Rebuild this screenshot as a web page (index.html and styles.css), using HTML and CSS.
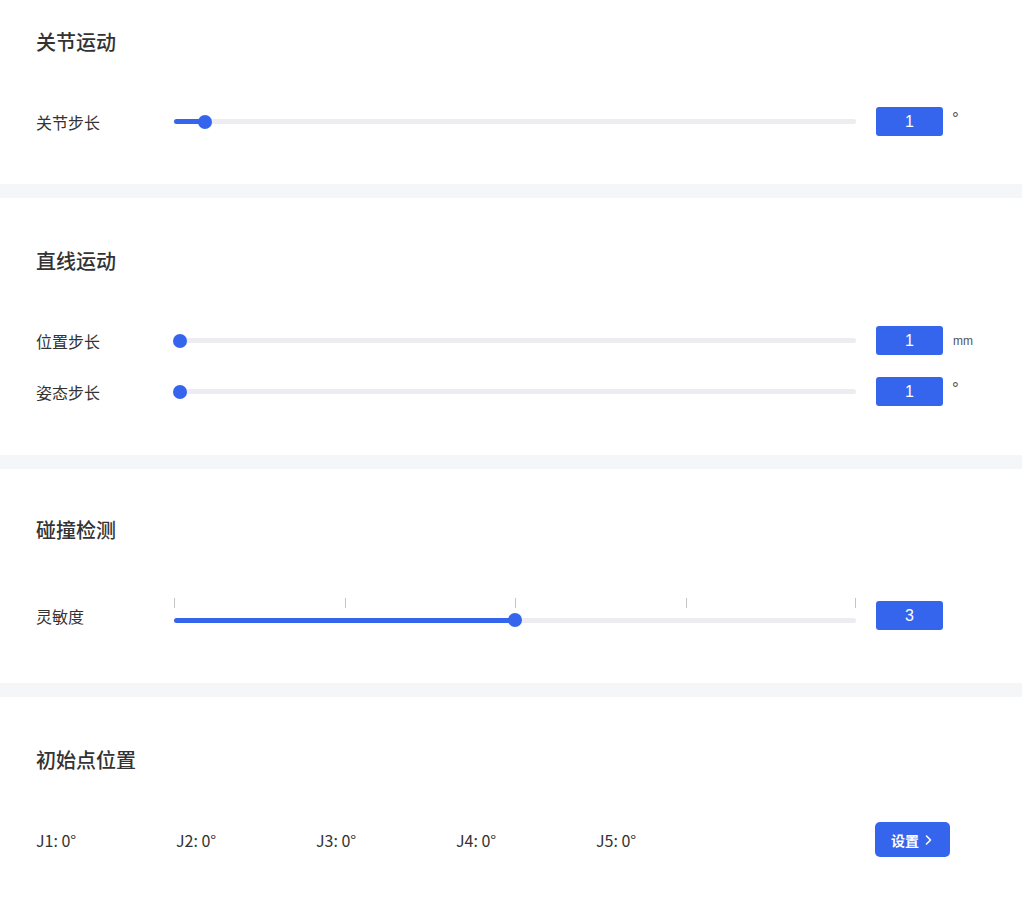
FILE: index.html
```html
<!DOCTYPE html>
<html lang="zh-CN">
<head>
<meta charset="utf-8">
<title>设置</title>
<link rel="stylesheet" href="styles.css">
</head>
<body>
<section class="panel panel-first">
  <h2 class="title">关节运动</h2>
  <div class="row row-first">
    <div class="label">关节步长</div>
    <div class="slider">
      <div class="track">
        <div class="fill" style="width:31px"></div>
        <div class="thumb" style="left:31px"></div>
      </div>
    </div>
    <div class="box">1</div>
    <div class="unit unit-deg">°</div>
  </div>
</section>

<section class="panel">
  <h2 class="title">直线运动</h2>
  <div class="row row-first">
    <div class="label">位置步长</div>
    <div class="slider">
      <div class="track">
        <div class="thumb" style="left:6px"></div>
      </div>
    </div>
    <div class="box">1</div>
    <div class="unit unit-mm">mm</div>
  </div>
  <div class="row row-next">
    <div class="label">姿态步长</div>
    <div class="slider">
      <div class="track">
        <div class="thumb" style="left:6px"></div>
      </div>
    </div>
    <div class="box">1</div>
    <div class="unit unit-deg">°</div>
  </div>
</section>

<section class="panel panel-collision">
  <h2 class="title">碰撞检测</h2>
  <div class="row row-marks">
    <div class="label">灵敏度</div>
    <div class="slider slider-marks">
      <div class="track">
        <span class="tick" style="left:0%"></span>
        <span class="tick" style="left:25%"></span>
        <span class="tick" style="left:50%"></span>
        <span class="tick" style="left:75%"></span>
        <span class="tick" style="left:calc(100% - 1px)"></span>
        <div class="fill" style="width:50%"></div>
        <div class="thumb" style="left:50%"></div>
      </div>
    </div>
    <div class="box">3</div>
    <div class="unit"></div>
  </div>
</section>

<section class="panel panel-last">
  <h2 class="title">初始点位置</h2>
  <div class="joints">
    <div class="joint">J1: 0°</div>
    <div class="joint">J2: 0°</div>
    <div class="joint">J3: 0°</div>
    <div class="joint">J4: 0°</div>
    <div class="joint">J5: 0°</div>
    <button class="btn">设置
      <svg class="chev" width="7" height="10" viewBox="0 0 7 10"><path d="M1.5 1 L5.5 5 L1.5 9" fill="none" stroke="#fff" stroke-width="1.6" stroke-linecap="round" stroke-linejoin="round"/></svg>
    </button>
  </div>
</section>
</body>
</html>
```

FILE: styles.css
```css
* { box-sizing: border-box; }
html, body { margin: 0; padding: 0; }
body {
  background: #f5f6f8;
  font-family: "Noto Sans CJK SC", "Noto Sans", sans-serif;
  color: #333;
  width: 1022px;
}
.panel {
  background: #fff;
  padding: 49px 36px 49px 36px;
  margin-bottom: 14px;
}
.panel-first { padding-top: 28px; padding-bottom: 48px; }
.panel-collision { padding-top: 47px; padding-bottom: 53px; }
.panel-last { padding-bottom: 46px; margin-bottom: 0; }

.title {
  margin: 0;
  font-size: 20px;
  line-height: 28px;
  font-weight: 500;
  color: #333;
}

.row {
  display: flex;
  align-items: center;
  height: 29px;
}
.row-first { margin-top: 51px; }
.row-next { margin-top: 22px; }
.row-marks { margin-top: 57px; }

.label {
  width: 138px;
  flex: none;
  font-size: 16px;
  color: #333;
}
.slider {
  flex: 1;
  min-width: 0;
  height: 14px;
  display: flex;
  align-items: center;
}
.slider-marks { margin-top: 9px; }
.track {
  position: relative;
  width: 100%;
  height: 5px;
  border-radius: 3px;
  background: #ececf1;
}
.fill {
  position: absolute;
  left: 0; top: 0; bottom: 0;
  border-radius: 3px;
  background: #3565ec;
}
.thumb {
  position: absolute;
  top: 50%;
  width: 14px;
  height: 14px;
  margin: -7px 0 0 -7px;
  border-radius: 50%;
  background: #3565ec;
}
.tick {
  position: absolute;
  top: -20px;
  width: 1px;
  height: 10px;
  background: #c4c4c4;
}
.box {
  flex: none;
  width: 67px;
  height: 29px;
  margin-left: 20px;
  border-radius: 3px;
  background: #3565ec;
  color: #fff;
  font-family: "Liberation Sans", Arial, sans-serif;
  font-size: 16px;
  display: flex;
  align-items: center;
  justify-content: center;
}
.unit {
  flex: none;
  width: 34px;
  margin-left: 9px;
  padding-left: 0;
  color: #555;
  font-family: "Liberation Sans", Arial, sans-serif;
  white-space: nowrap;
}
.unit-deg { font-size: 17px; margin-top: -5px; }
.unit-mm { font-size: 12px; padding-left: 1px; margin-top: 1px; }

.joints {
  display: flex;
  align-items: center;
  height: 35px;
  margin-top: 48px;
}
.joint {
  width: 140px;
  flex: none;
  font-size: 16px;
  color: #333;
}
.btn {
  margin-left: auto;
  margin-right: 36px;
  width: 75px;
  height: 35px;
  border: none;
  border-radius: 5px;
  background: #3565ec;
  color: #fff;
  font-family: "Noto Sans CJK SC", sans-serif;
  font-size: 14px;
  font-weight: 700;
  padding: 0 0 0 16px;
  display: flex;
  align-items: center;
  gap: 6px;
}
.chev { display: block; }
```
